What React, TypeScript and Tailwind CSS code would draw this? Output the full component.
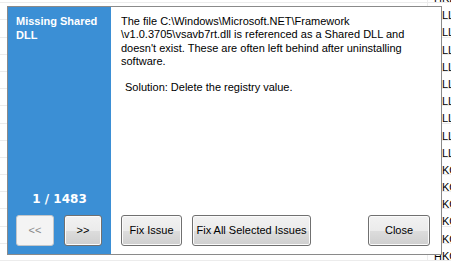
import React from "react";

const rows = [
  "HKEY_LOCAL_MACHINE",
  "DLL",
  "DLL",
  "DLL",
  "DLL",
  "DLL",
  "DLL",
  "DLL",
  "DLL",
  "DLL",
  "HKCU",
  "HKCU",
  "HKCU",
  "HKCU",
  "HKCU",
  "HKCU",
];

const btn =
  "h-[31px] rounded-[3px] border border-[#707070] bg-[linear-gradient(#f2f2f2_0%,#ebebeb_50%,#dddddd_50%,#cfcfcf_100%)] shadow-[inset_0_0_0_1px_#fbfbfb] text-[11px] text-black flex items-center justify-center";

export default function App() {
  return (
    <div className="relative w-[451px] h-[263px] overflow-hidden bg-white font-['Liberation_Sans',Arial,sans-serif] text-[11px] text-black">
      {/* list behind the dialog */}
      <div className="mt-[-14px]">
        {rows.map((r, i) => (
          <div key={i} className="flex h-[17.2px] border-b border-[#ececec] overflow-hidden">
            <div className="w-[428px] shrink-0 border-r border-[#ececec]" />
            <div className="pl-[6px] pt-[4px] leading-[17px] whitespace-nowrap">{r}</div>
          </div>
        ))}
      </div>

      {/* dialog */}
      <div className="absolute left-[7px] top-[6px] w-[435px] h-[249px] border border-[#8a8a8a] bg-white flex">
        <div className="w-[103px] bg-[#3b8fd5] flex flex-col pt-[7px] pb-[8px] px-[8px] text-white">
          <div className="font-bold text-[11px] leading-[14px]">
            Missing Shared
            <br />
            DLL
          </div>
          <div className="mt-auto mb-[9px] text-center font-['DejaVu_Sans',sans-serif] font-bold text-[12px] leading-[14px]">
            1 / 1483
          </div>
          <div className="flex gap-[10px]">
            <div className="w-[38px] h-[31px] rounded-[3px] border border-[#c3c6c9] bg-[#f4f4f4] text-[11px] text-[#8a8a8a] flex items-center justify-center">
              &lt;&lt;
            </div>
            <div className={`w-[38px] ${btn}`}>&gt;&gt;</div>
          </div>
        </div>

        <div className="flex-1 flex flex-col pt-[8px] pl-[10px] pr-[11px] pb-[8px]">
          <div className="leading-[13.3px] whitespace-nowrap">
            The file C:\Windows\Microsoft.NET\Framework
            <br />
            \v1.0.3705\vsavb7rt.dll is referenced as a Shared DLL and
            <br />
            doesn't exist. These are often left behind after uninstalling
            <br />
            software.
            <br />
            <br />
            <span className="pl-[4px]">Solution: Delete the registry value.</span>
          </div>
          <div className="mt-auto flex">
            <div className={`w-[61px] ${btn}`}>Fix Issue</div>
            <div className={`w-[119px] ml-[10px] ${btn}`}>Fix All Selected Issues</div>
            <div className={`w-[62px] ml-auto ${btn}`}>Close</div>
          </div>
        </div>
      </div>
    </div>
  );
}
